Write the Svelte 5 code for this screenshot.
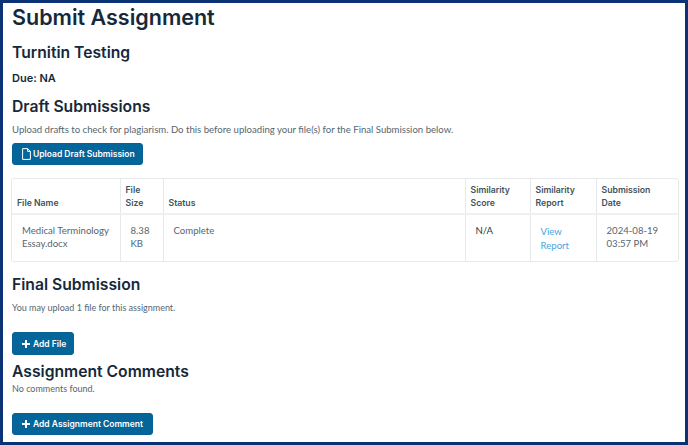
<script>
    const rows = [
        { name: 'Medical Terminology Essay.docx', size: '8.38 KB', status: 'Complete', score: 'N/A', date: '2024-08-19 03:57 PM' }
    ];
</script>

<div class="frame">
    <h1>Submit Assignment</h1>
    <h2>Turnitin Testing</h2>
    <p class="due">Due: NA</p>
    <h2 class="draft">Draft Submissions</h2>
    <p class="note">Upload drafts to check for plagiarism. Do this before uploading your file(s) for the Final Submission below.</p>
    <button class="btn upload">
        <svg width="9" height="12" viewBox="0 0 9 12" fill="none" stroke="#fff" stroke-width="1">
            <path d="M.6.6h5l2.8 2.8v8H.6z" />
            <path d="M5.6.6v2.8h2.8" />
        </svg>
        Upload Draft Submission
    </button>

    <div class="table-wrap">
        <table>
            <colgroup>
                <col style="width:108px" />
                <col style="width:43px" />
                <col style="width:302px" />
                <col style="width:65px" />
                <col style="width:66px" />
                <col />
            </colgroup>
            <thead>
                <tr>
                    <th>File Name</th>
                    <th>File Size</th>
                    <th>Status</th>
                    <th>Similarity Score</th>
                    <th>Similarity Report</th>
                    <th>Submission<br />Date</th>
                </tr>
            </thead>
            <tbody>
                {#each rows as row}
                    <tr>
                        <td>{row.name}</td>
                        <td>{row.size}</td>
                        <td>{row.status}</td>
                        <td class="score">{row.score}</td>
                        <td><a href="#report">View Report</a></td>
                        <td>{row.date}</td>
                    </tr>
                {/each}
            </tbody>
        </table>
    </div>

    <h2 class="final">Final Submission</h2>
    <p class="small">You may upload 1 file for this assignment.</p>
    <button class="btn add-file">
        <svg width="8" height="8" viewBox="0 0 8 8" fill="#fff"><path d="M3 0h2v3h3v2H5v3H3V5H0V3h3z" /></svg>
        Add File
    </button>
    <h2 class="comments">Assignment Comments</h2>
    <p class="small none">No comments found.</p>
    <button class="btn add-comment">
        <svg width="8" height="8" viewBox="0 0 8 8" fill="#fff"><path d="M3 0h2v3h3v2H5v3H3V5H0V3h3z" /></svg>
        Add Assignment Comment
    </button>
</div>

<style>
    :global(body) {
        margin: 0;
        background: #fff;
    }
    .frame {
        box-sizing: border-box;
        width: 688px;
        height: 445px;
        border: 3px solid #0a3274;
        padding: 0 6px 0 9px;
        overflow: hidden;
        font-family: Lato, sans-serif;
        color: #566670;
    }
    h1, h2 {
        margin: 0;
        font-family: Inter, sans-serif;
        font-weight: 600;
        color: #16293a;
    }
    h1 {
        font-size: 21.5px;
        line-height: 28px;
    }
    h2 {
        font-size: 15.7px;
        line-height: 22px;
        margin-top: 11px;
    }
    p {
        margin: 0;
    }
    .due {
        font-family: Inter, sans-serif;
        font-weight: 600;
        font-size: 11px;
        line-height: 16px;
        color: #16293a;
        margin-top: 6px;
    }
    h2.draft {
        margin-top: 10px;
    }
    .note {
        font-size: 9.6px;
        line-height: 14px;
        margin-top: 5px;
    }
    .btn {
        display: flex;
        align-items: center;
        gap: 3px;
        height: 23px;
        padding: 0 0 0 9px;
        border: 1px solid #0a5f94;
        border-radius: 3px;
        background: #04659b;
        color: #fff;
        font-family: Inter, sans-serif;
        font-weight: 600;
        font-size: 8.5px;
    }
    .upload {
        width: 131px;
        height: 22px;
        gap: 2px;
        margin-top: 6px;
    }
    .add-file {
        width: 62px;
        margin-top: 18px;
    }
    .add-comment {
        width: 141px;
        height: 22px;
        margin-top: 18px;
    }
    .table-wrap {
        width: 668px;
        margin: 13px 0 0 -1px;
        border: 1px solid #e6e9ea;
        border-radius: 3px;
        box-sizing: border-box;
    }
    table {
        width: 100%;
        table-layout: fixed;
        border-collapse: collapse;
    }
    th {
        height: 35px;
        padding: 0 5px 3px;
        box-sizing: border-box;
        vertical-align: bottom;
        text-align: left;
        font-family: Inter, sans-serif;
        font-weight: 600;
        font-size: 8.7px;
        line-height: 13px;
        color: #42535c;
        border-right: 1px solid #e6e9ea;
        border-bottom: 2px solid #eef0f1;
    }
    td {
        height: 47px;
        padding: 9px 9px 0 10px;
        box-sizing: border-box;
        vertical-align: top;
        font-size: 9.6px;
        line-height: 13px;
        border-right: 1px solid #e6e9ea;
    }
    th:last-child, td:last-child {
        border-right: none;
    }
    .score {
        color: #33383b;
    }
    a {
        color: #4aa3dc;
        text-decoration: none;
        line-height: 14px;
        display: block;
        margin-top: 1px;
    }
    h2.final {
        margin-top: 12px;
    }
    .small {
        font-size: 9px;
        line-height: 13px;
        margin-top: 5px;
    }
    h2.comments {
        margin-top: 6px;
    }
    .none {
        margin-top: -1px;
    }
</style>
